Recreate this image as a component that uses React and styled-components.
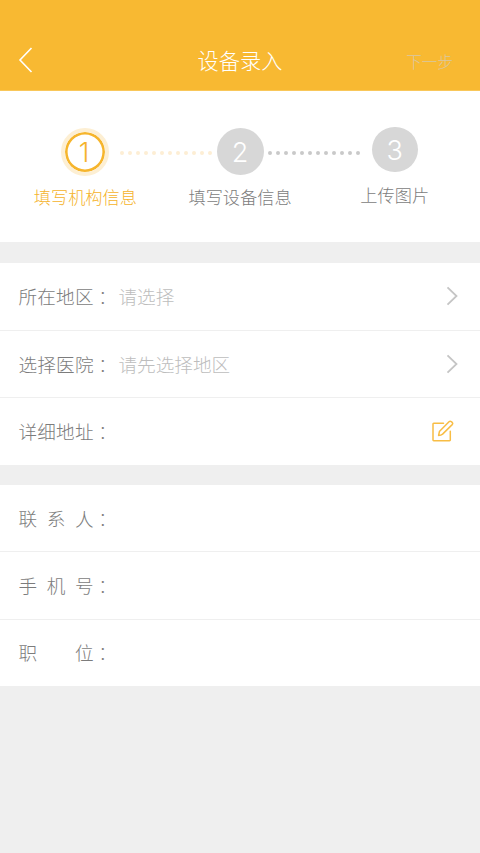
import React from "react";
import styled, { createGlobalStyle } from "styled-components";

const GlobalStyle = createGlobalStyle`
  * { box-sizing: border-box; }
  body {
    margin: 0;
    background: #efefef;
    font-family: "Noto Sans CJK SC", "Noto Sans", sans-serif;
    font-weight: 300;
  }
`;

const Page = styled.main`
  min-height: 853px;
  background: #efefef;
`;

const Header = styled.header`
  display: grid;
  grid-template-columns: 120px 1fr 120px;
  align-items: center;
  height: 91px;
  padding-top: 30px;
  background: #f8b932;
  border-bottom: 1px solid #f9c75a;
`;

const BackButton = styled.button`
  display: flex;
  justify-self: start;
  margin-left: 18px;
  padding: 0;
  border: 0;
  background: none;
`;

const Title = styled.h1`
  margin: 0;
  font-size: 21.2px;
  font-weight: 300;
  line-height: 30px;
  text-align: center;
  color: #fff;
`;

const NextButton = styled.button`
  justify-self: end;
  margin: 1px 27px 0 0;
  padding: 0;
  border: 0;
  background: none;
  font: inherit;
  font-size: 15.6px;
  line-height: 24px;
  color: #d9c8a4;
`;

const Stepper = styled.section`
  height: 151px;
  padding-top: 35px;
  background: #fff;
`;

const Track = styled.div`
  display: flex;
  align-items: center;
  height: 52px;
  padding-left: 61px;
`;

const Circle = styled.div`
  display: flex;
  align-items: center;
  justify-content: center;
  flex: none;
  width: ${(p) => p.$size}px;
  height: ${(p) => p.$size}px;
  margin-bottom: ${(p) => p.$lift || 0}px;
  padding: 2px ${(p) => (p.$active ? 2 : 0)}px 0 0;
  border-radius: 50%;
  background: ${(p) => (p.$active ? "#fff" : "#d7d7d7")};
  border: ${(p) => (p.$active ? "4px solid #fdefd3" : "0")};
  box-shadow: ${(p) => (p.$active ? "inset 0 0 0 2.6px #f6b52c" : "none")};
  color: ${(p) => (p.$active ? "#f5b32b" : "#fff")};
  font-family: Inter, sans-serif;
  font-size: 27px;
  line-height: 28px;
`;

const Dots = styled.div`
  display: flex;
  justify-content: space-between;
  flex: none;
  width: 92px;
  margin: 1px ${(p) => p.$after}px 0 ${(p) => p.$before}px;
  color: ${(p) => (p.$active ? "#fdeed4" : "#c9c9c9")};
`;

const Dot = styled.i`
  width: 4px;
  height: 4px;
  border-radius: 50%;
  background: currentColor;
`;

const Labels = styled.div`
  display: flex;
  padding-left: 8px;
`;

const StepLabel = styled.div`
  width: 154.7px;
  margin-top: ${(p) => (p.$raised ? 5 : 7)}px;
  font-size: 17.2px;
  line-height: 24px;
  text-align: center;
  color: ${(p) => (p.$active ? "#f5b32b" : "#7c7c7c")};
`;

const Group = styled.section`
  margin-top: ${(p) => p.$gap}px;
  background: #fff;
`;

const Row = styled.div`
  display: flex;
  align-items: center;
  height: ${(p) => p.$height || 67}px;
  padding: 0 ${(p) => p.$end || 22}px 1px 18.5px;
  border-bottom: 1px solid #efefef;
  font-size: 18.6px;
  line-height: 28px;
  color: #7c7c7c;

  &:last-child {
    padding-bottom: 2px;
    border-bottom: 0;
  }
`;

const FieldLabel = styled.span`
  display: flex;
  justify-content: space-between;
  width: 75px;
`;

const Colon = styled.span`
  width: 19px;
  padding-top: 2px;
  font-family: "Noto Sans CJK TC", sans-serif;
  font-weight: 100;
`;

const Value = styled.span`
  flex: 1;
  padding-left: 6px;
  color: #bdbdbd;
`;

function Chevron() {
  return (
    <svg width="12" height="20" viewBox="0 0 12 20" fill="none" stroke="#c5c5c5" strokeWidth="1.8">
      <path d="M1.5 1.3 10.5 10 1.5 18.7" />
    </svg>
  );
}

function EditIcon() {
  return (
    <svg width="22" height="22" viewBox="0 0 22 22" fill="none" stroke="#f8bd45" strokeWidth="1.5" strokeLinejoin="round" strokeLinecap="round">
      <path d="M11.5 3.3H1.7Q1 3.3 1 4v16.1q0 .7.7.7h15.9q.7 0 .7-.7v-8.8" />
      <path d="M6.6 15.5 7.4 11.6 17 1.8q1.1-1 2.2-.2l1 .8q1 1.1 0 2.2L10.6 14.1Q9 15.4 6.6 15.5Z" />
    </svg>
  );
}

function DottedLine({ active, before, after }) {
  return (
    <Dots $active={active} $before={before} $after={after}>
      {Array.from({ length: 12 }, (_, i) => <Dot key={i} />)}
    </Dots>
  );
}

function Field({ label, value, icon, end, height }) {
  return (
    <Row $end={end} $height={height}>
      <FieldLabel>{[...label].map((c) => <span key={c}>{c}</span>)}</FieldLabel>
      <Colon>：</Colon>
      <Value>{value}</Value>
      {icon}
    </Row>
  );
}

export default function App() {
  return (
    <Page>
      <GlobalStyle />
      <Header>
        <BackButton aria-label="返回">
          <svg width="15" height="26" viewBox="0 0 15 26" fill="none" stroke="#fff" strokeWidth="1.6">
            <path d="M13.5 1 2 13 13.5 25" />
          </svg>
        </BackButton>
        <Title>设备录入</Title>
        <NextButton>下一步</NextButton>
      </Header>
      <Stepper>
        <Track>
          <Circle $active $size={48}>1</Circle>
          <DottedLine active before={11} after={4.5} />
          <Circle $size={47} $lift={1}>2</Circle>
          <DottedLine before={4.5} after={12} />
          <Circle $size={45.5} $lift={5}>3</Circle>
        </Track>
        <Labels>
          <StepLabel $active>填写机构信息</StepLabel>
          <StepLabel>填写设备信息</StepLabel>
          <StepLabel $raised>上传图片</StepLabel>
        </Labels>
      </Stepper>
      <Group $gap={21}>
        <Field label="所在地区" value="请选择" icon={<Chevron />} height={68} />
        <Field label="选择医院" value="请先选择地区" icon={<Chevron />} />
        <Field label="详细地址" icon={<EditIcon />} end={26} />
      </Group>
      <Group $gap={20}>
        <Field label="联系人" />
        <Field label="手机号" height={68} />
        <Field label="职位" height={66} />
      </Group>
    </Page>
  );
}
